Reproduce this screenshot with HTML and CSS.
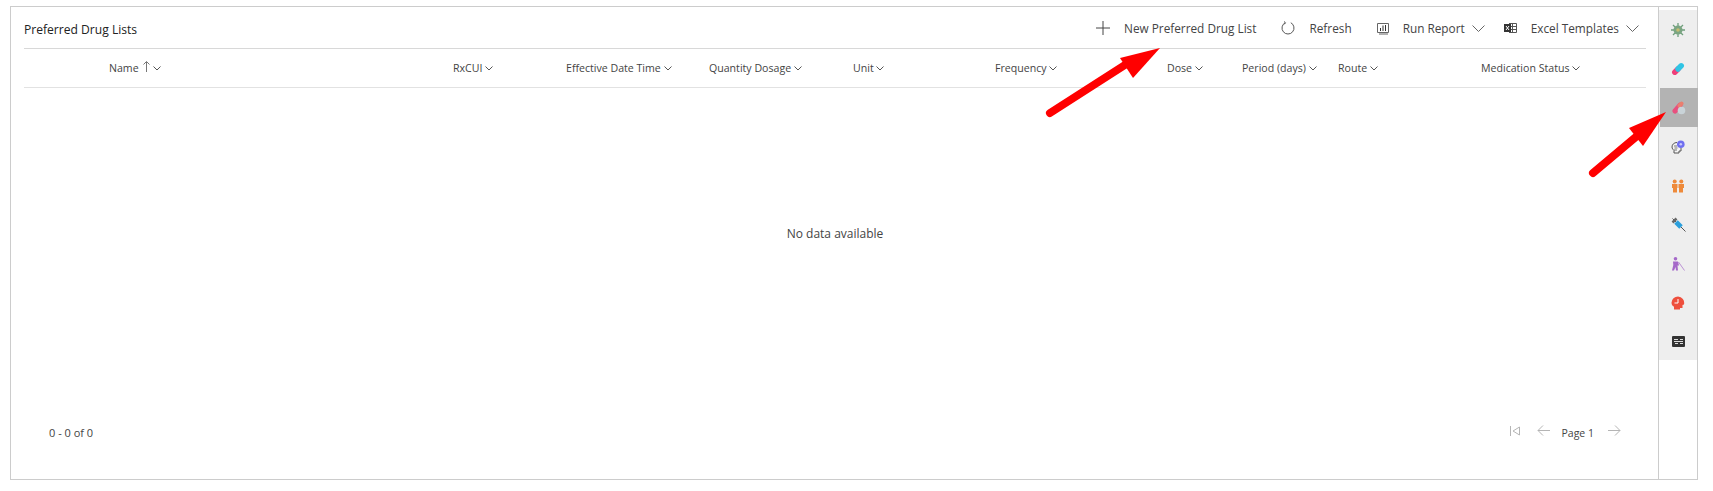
FILE: index.html
```html
<!DOCTYPE html>
<html lang="en">
<head>
    <meta charset="UTF-8">
    <meta name="viewport" content="width=device-width, initial-scale=1.0">
    <title>Preferred Drug Lists</title>
    <link rel="stylesheet" href="styles.css">
</head>
<body>
    <div class="frame">
        <div class="main">
            <div class="titlebar">
                <h1>Preferred Drug Lists</h1>
                <div class="commands">
                    <button class="cmd cmd-new">
                        <svg width="14" height="14" viewBox="0 0 14 14"><path d="M7 0v14M0 7h14" stroke="#444" fill="none"/></svg>
                        <span>New Preferred Drug List</span>
                    </button>
                    <button class="cmd cmd-refresh">
                        <svg width="14" height="14" viewBox="0 0 14 14"><path d="M4.200 1.700A6 6 0 1 0 9.800 1.700M3 .5l1.500 1.300-1.300 1.600" stroke="#555" fill="none"/></svg>
                        <span>Refresh</span>
                    </button>
                    <button class="cmd cmd-report">
                        <svg width="12" height="13" viewBox="0 0 12 13"><path d="M.5 1.500h11v9H.5zM2 12h9" stroke="#666" fill="none"/><path d="M3.500 9V6M6 9V3.500M8.500 9V3" stroke="#333" fill="none"/></svg>
                        <span>Run Report</span>
                        <svg class="caret" width="13" height="7" viewBox="0 0 13 7"><path d="M.5.5l6 6 6-6" stroke="#666" fill="none"/></svg>
                    </button>
                    <button class="cmd cmd-excel">
                        <svg width="13" height="12" viewBox="0 0 13 12"><path d="M5 1.500h7.500v9H5M5 4.500h7.500M5 7.500h7.500M8.500 1.500v9" stroke="#555" fill="none"/><path d="M0 2h7v8H0z" fill="#333"/><path d="M2 4l3 4M5 4L2 8" stroke="#fff" fill="none"/></svg>
                        <span>Excel Templates</span>
                        <svg class="caret" width="13" height="7" viewBox="0 0 13 7"><path d="M.5.5l6 6 6-6" stroke="#666" fill="none"/></svg>
                    </button>
                </div>
            </div>

            <div class="grid-head">
                <div class="col">Name
                    <svg class="sort" width="7" height="11" viewBox="0 0 7 11"><path d="M3.500 11V.8M.5 3.500l3-3 3 3" stroke="#777" fill="none"/></svg><svg class="chev" width="8" height="5" viewBox="0 0 8 5"><path d="M.5.5L4 4 7.500.5" stroke="#555" fill="none"/></svg>
                </div>
                <div class="col">RxCUI <svg class="chev" width="8" height="5" viewBox="0 0 8 5"><path d="M.5.5L4 4 7.500.5" stroke="#555" fill="none"/></svg></div>
                <div class="col">Effective Date Time <svg class="chev" width="8" height="5" viewBox="0 0 8 5"><path d="M.5.5L4 4 7.500.5" stroke="#555" fill="none"/></svg></div>
                <div class="col">Quantity Dosage <svg class="chev" width="8" height="5" viewBox="0 0 8 5"><path d="M.5.5L4 4 7.500.5" stroke="#555" fill="none"/></svg></div>
                <div class="col">Unit <svg class="chev" width="8" height="5" viewBox="0 0 8 5"><path d="M.5.5L4 4 7.500.5" stroke="#555" fill="none"/></svg></div>
                <div class="col">Frequency <svg class="chev" width="8" height="5" viewBox="0 0 8 5"><path d="M.5.5L4 4 7.500.5" stroke="#555" fill="none"/></svg></div>
                <div class="col">Dose <svg class="chev" width="8" height="5" viewBox="0 0 8 5"><path d="M.5.5L4 4 7.500.5" stroke="#555" fill="none"/></svg></div>
                <div class="col">Period (days) <svg class="chev" width="8" height="5" viewBox="0 0 8 5"><path d="M.5.5L4 4 7.500.5" stroke="#555" fill="none"/></svg></div>
                <div class="col">Route <svg class="chev" width="8" height="5" viewBox="0 0 8 5"><path d="M.5.5L4 4 7.500.5" stroke="#555" fill="none"/></svg></div>
                <div class="col">Medication Status <svg class="chev" width="8" height="5" viewBox="0 0 8 5"><path d="M.5.5L4 4 7.500.5" stroke="#555" fill="none"/></svg></div>
            </div>

            <div class="empty">No data available</div>

            <div class="pager">
                <span class="count">0 - 0 of 0</span>
                <div class="pages">
                    <svg class="first" width="10" height="10" viewBox="0 0 10 10"><path d="M.5 0v10M9.500 1v8L3 5z" stroke="#b5b5b5" fill="none"/></svg>
                    <svg class="back" width="13" height="11" viewBox="0 0 13 11"><path d="M13 5.500H1M6 .5l-5 5 5 5" stroke="#b5b5b5" fill="none"/></svg>
                    <span class="page-no">Page 1</span>
                    <svg width="13" height="11" viewBox="0 0 13 11"><path d="M0 5.500h12M7 .5l5 5-5 5" stroke="#b5b5b5" fill="none"/></svg>
                </div>
            </div>
        </div>

        <div class="side">
            <div class="tabs">
                <div class="tab">
                    <svg width="14" height="14" viewBox="0 0 14 14"><g stroke="#6f9f7c" stroke-width="1.300"><path d="M7 0v14M0 7h14M2 2l10 10M12 2L2 12"/></g><circle cx="7" cy="7" r="4.500" fill="#7aa582"/><circle cx="7" cy="7" r="1.800" fill="#c5bd72"/></svg>
                </div>
                <div class="tab">
                    <svg width="14" height="14" viewBox="0 0 14 14"><path d="M7 7L3.800 10.200" stroke="#ee3f7a" stroke-width="5.500" stroke-linecap="round"/><path d="M7 7l3.200-3.200" stroke="#2fc4e4" stroke-width="5.500" stroke-linecap="round"/></svg>
                </div>
                <div class="tab tab-on">
                    <svg width="14" height="14" viewBox="0 0 14 14"><path d="M3 10L8 4.200" stroke="#e8507e" stroke-width="5" stroke-linecap="round"/><path d="M7.500 4.700l2-2.200" stroke="#ea7f6f" stroke-width="4" stroke-linecap="round"/><circle cx="9.500" cy="9.500" r="3.800" fill="#c9d3d8"/></svg>
                </div>
                <div class="tab">
                    <svg width="14" height="14" viewBox="0 0 14 14"><path d="M6 2.500C3 2.500 1 4.500 1 7c0 1.500 1 2.500 2 3.500V13h5v-2h2V8" fill="#f4f4f4" stroke="#555"/><path d="M3 6h3M3.500 8h3M3 10h3" stroke="#777"/><circle cx="9.800" cy="4.200" r="3.800" fill="#6f6ff0"/><circle cx="9.800" cy="4.200" r="1.300" fill="#c9c9fa"/></svg>
                </div>
                <div class="tab">
                    <svg width="14" height="14" viewBox="0 0 14 14" fill="#ee8a3a"><circle cx="3.700" cy="2.500" r="2"/><circle cx="10.300" cy="2.500" r="2"/><path d="M1 5h5.500v4H6v4.500H2V9H1zM7.500 5H13v4h-1v4.500H8V9h-.5z"/></svg>
                </div>
                <div class="tab">
                    <svg width="15" height="15" viewBox="0 0 15 15"><path d="M1.500 1.500l13 13" stroke="#555" stroke-width="1"/><path d="M1.500 5.500L5.500 1.500" stroke="#666" stroke-width="2.500"/><path d="M5 5l5 5" stroke="#2b9fdc" stroke-width="5"/></svg>
                </div>
                <div class="tab">
                    <svg width="14" height="14" viewBox="0 0 14 14" fill="#a569c9"><circle cx="4.500" cy="1.800" r="1.800"/><path d="M2 4.500h5l1 4H6.500L7 13.500H5L4.500 10 3 13.500H1L2.300 8z"/><path d="M7.500 5l6 8.500" stroke="#a569c9" stroke-width=".7" fill="none"/></svg>
                </div>
                <div class="tab">
                    <svg width="14" height="14" viewBox="0 0 14 14"><path d="M7 .5a6.500 6.500 0 0 0-6.500 6.300c0 2 1 3 2.500 4v2.700h6V12h2.500V9l1.500-.5A6.500 6.500 0 0 0 7 .5z" fill="#ee4f3d"/><path d="M7 3v4H3.500" stroke="#fff" fill="none"/></svg>
                </div>
                <div class="tab">
                    <svg width="13" height="11" viewBox="0 0 13 11"><rect width="13" height="11" rx="1" fill="#333"/><path d="M2 3.500h4M8 3.500h3M2 5.500h9M3 7.500h3M8 7.500h3" stroke="#ddd"/></svg>
                </div>
            </div>
        </div>
    </div>

    <!-- annotation arrows drawn over the page -->
    <svg class="arrows" width="1713" height="491" viewBox="0 0 1713 491">
        <path d="M1050 113L1128 63" stroke="#ff0000" stroke-width="8" stroke-linecap="round"/>
        <path d="M1160 48L1120 58L1133 78z" fill="#ff0000"/>
        <path d="M1593 173L1637 136" stroke="#ff0000" stroke-width="8" stroke-linecap="round"/>
        <path d="M1666 112L1629 128L1643 146z" fill="#ff0000"/>
    </svg>
</body>
</html>
```

FILE: styles.css
```css
body {
    margin: 0;
    background: #fff;
    font-family: "Open Sans", "Noto Sans", sans-serif;
    font-size: 11px;
    color: #444;
    overflow: hidden;
}
.frame {
    display: flex;
    width: 1686px;
    height: 472px;
    margin: 6px 0 0 10px;
    border: 1px solid #ccc;
}
.main {
    flex: 1;
    display: flex;
    flex-direction: column;
    padding: 0 12px 0 13px;
}
.titlebar {
    display: flex;
    align-items: center;
    justify-content: space-between;
    height: 41px;
    border-bottom: 1px solid #d8d8d8;
}
h1 {
    margin: 0;
    padding-top: 3px;
    font-size: 12.100px;
    font-weight: 400;
    color: #222;
}
.commands { display: flex; align-items: center; padding-top: 1px; }
.cmd {
    display: flex;
    align-items: center;
    padding: 0;
    border: none;
    background: none;
    font: inherit;
    font-size: 11.800px;
    color: #444;
}
.cmd svg { flex: none; }
.cmd-new { margin-right: 25px; gap: 14px; }
.cmd-refresh { margin-right: 25px; gap: 14px; }
.cmd-report { margin-right: 19px; gap: 14px; }
.cmd-excel { margin-right: 7px; gap: 14px; }
.cmd .caret { margin-left: -7px; }

.grid-head {
    display: grid;
    grid-template-columns: 344px 113px 143px 144px 142px 172px 75px 96px 143px 1fr;
    align-items: center;
    height: 38px;
    padding-left: 85px;
    border-bottom: 1px solid #e2e2e2;
    font-size: 10.600px;
    color: #444;
}
.col { white-space: nowrap; }
.sort { margin: 0 3px 0 2px; }
.chev { vertical-align: 1px; }

.empty {
    flex: 1;
    display: flex;
    align-items: center;
    justify-content: center;
    font-size: 12px;
    color: #444;
}
.pager {
    display: flex;
    align-items: center;
    justify-content: space-between;
    padding: 47px 25px 39px 25px;
    font-size: 11px;
}
.pages { display: flex; align-items: center; gap: 15px; }
.pages svg { margin-top: -4px; }
.page-no { margin: 0 -1px; font-size: 10.500px; }
.first { margin-right: 2px; }
.back { margin-right: -2px; }

.side {
    flex: none;
    width: 38px;
    border-left: 1px solid #ccc;
    padding-top: 3px;
}
.tabs {
    height: 350px;
    background: #eeeeee;
}
.tab {
    display: flex;
    align-items: center;
    justify-content: center;
    height: 39px;
}
.tab-on {
    margin: 0 -1px 0 1px;
    background: #b3b3b3;
}

.arrows {
    position: absolute;
    left: 0;
    top: 0;
    pointer-events: none;
}
```
